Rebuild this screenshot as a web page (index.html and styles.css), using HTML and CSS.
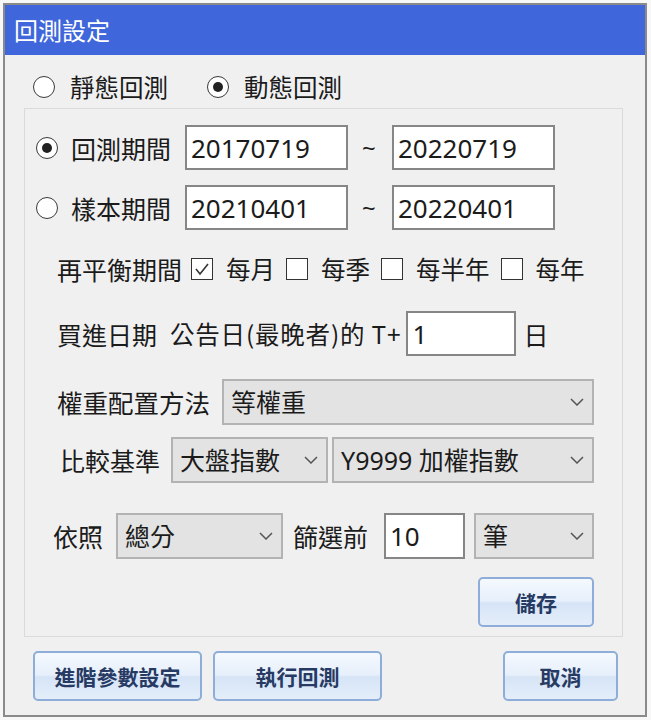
FILE: index.html
```html
<!DOCTYPE html>
<html lang="zh-Hant">
<head>
<meta charset="utf-8">
<title>回測設定</title>
<link rel="stylesheet" href="styles.css">
</head>
<body>
<div class="window">
  <div class="titlebar">回測設定</div>
  <div class="content">
    <div class="mode-row">
      <span class="radio"></span><span class="mode-label">靜態回測</span>
      <span class="radio checked mode-second"></span><span class="mode-label">動態回測</span>
    </div>
    <div class="group">
      <div class="row period-row first">
        <span class="radio checked"></span>
        <span class="label period-label">回測期間</span>
        <div class="textbox date">20170719</div>
        <span class="tilde">~</span>
        <div class="textbox date">20220719</div>
      </div>
      <div class="row period-row second">
        <span class="radio"></span>
        <span class="label period-label">樣本期間</span>
        <div class="textbox date">20210401</div>
        <span class="tilde">~</span>
        <div class="textbox date">20220401</div>
      </div>
      <div class="row check-row">
        <span class="label rebalance-label">再平衡期間</span>
        <span class="checkbox checked"><svg viewBox="0 0 22 22" width="22" height="22"><polyline points="5,11 9,16 17,6" fill="none" stroke="#333" stroke-width="1.6"/></svg></span>
        <span class="check-label">每月</span>
        <span class="checkbox"></span>
        <span class="check-label">每季</span>
        <span class="checkbox"></span>
        <span class="check-label">每半年</span>
        <span class="checkbox"></span>
        <span class="check-label">每年</span>
      </div>
      <div class="row buy-row">
        <span class="label buy-label">買進日期</span>
        <span class="label buy-text">公告日(最晚者)的 T+</span>
        <div class="textbox tplus">1</div>
        <span class="label day-label">日</span>
      </div>
      <div class="row weight-row">
        <span class="label weight-label">權重配置方法</span>
        <div class="select weight-select"><span>等權重</span><svg class="chev" viewBox="0 0 14 8" width="14" height="8"><polyline points="1,1 7,7 13,1" fill="none" stroke="#555" stroke-width="1.5"/></svg></div>
      </div>
      <div class="row compare-row">
        <span class="label compare-label">比較基準</span>
        <div class="select market-select"><span>大盤指數</span><svg class="chev" viewBox="0 0 14 8" width="14" height="8"><polyline points="1,1 7,7 13,1" fill="none" stroke="#555" stroke-width="1.5"/></svg></div>
        <div class="select index-select"><span>Y9999 加權指數</span><svg class="chev" viewBox="0 0 14 8" width="14" height="8"><polyline points="1,1 7,7 13,1" fill="none" stroke="#555" stroke-width="1.5"/></svg></div>
      </div>
      <div class="row filter-row">
        <span class="label by-label">依照</span>
        <div class="select score-select"><span>總分</span><svg class="chev" viewBox="0 0 14 8" width="14" height="8"><polyline points="1,1 7,7 13,1" fill="none" stroke="#555" stroke-width="1.5"/></svg></div>
        <span class="label top-label">篩選前</span>
        <div class="textbox count">10</div>
        <div class="select unit-select"><span>筆</span><svg class="chev" viewBox="0 0 14 8" width="14" height="8"><polyline points="1,1 7,7 13,1" fill="none" stroke="#555" stroke-width="1.5"/></svg></div>
      </div>
      <div class="row save-row">
        <button class="btn save-btn">儲存</button>
      </div>
    </div>
    <div class="bottom-row">
      <button class="btn adv-btn">進階參數設定</button>
      <button class="btn run-btn">執行回測</button>
      <button class="btn cancel-btn">取消</button>
    </div>
  </div>
</div>
</body>
</html>
```

FILE: styles.css
```css
* { box-sizing: border-box; }

html, body {
  margin: 0;
  padding: 0;
  background: #f7f7f7;
}

body {
  font-family: "Noto Sans", "Noto Sans CJK TC", sans-serif;
  color: #1b1b1b;
  padding-top: 3px;
  padding-left: 3px;
}

.window {
  width: 644px;
  height: 714px;
  border: 2px solid #8a8a8a;
  background: #f0f0f0;
  display: flex;
  flex-direction: column;
}

.titlebar {
  height: 50px;
  background: #3f66da;
  color: #ffffff;
  font-family: "Noto Sans CJK TC", sans-serif;
  font-size: 24px;
  line-height: 50px;
  padding-left: 9px;
}

.content {
  padding: 12px 0 0 0;
}

.mode-row {
  height: 40px;
  display: flex;
  align-items: center;
  padding-left: 28px;
}

.mode-label {
  font-family: "Noto Sans CJK TC", sans-serif;
  font-size: 24.5px;
  line-height: 30px;
  margin-left: 15px;
}

.mode-second {
  margin-left: 39px;
}

.radio {
  width: 22px;
  height: 22px;
  border-radius: 50%;
  border: 1.6px solid #3a3a3a;
  background: #ffffff;
  display: inline-flex;
  align-items: center;
  justify-content: center;
  flex: none;
}

.radio.checked::after {
  content: "";
  width: 10px;
  height: 10px;
  border-radius: 50%;
  background: #222;
}

.group {
  margin: 1px 0 0 19px;
  width: 599px;
  border: 1px solid #dadada;
  padding: 16px 0 9px 0;
}

.row {
  display: flex;
  align-items: center;
}

.label {
  font-family: "Noto Sans CJK TC", sans-serif;
  font-size: 25px;
  line-height: 30px;
  white-space: nowrap;
}

.textbox {
  background: #ffffff;
  border: 2px solid #868686;
  font-size: 26px;
  line-height: 30px;
  padding-left: 4px;
  display: flex;
  align-items: center;
  flex: none;
}

.period-row {
  height: 45px;
  padding-left: 11px;
}

.period-row.second {
  margin-top: 15px;
}

.period-label {
  margin-left: 13px;
  width: 100px;
}

.textbox.date {
  margin-left: 14px;
  width: 163px;
  height: 45px;
}

.tilde {
  font-size: 24px;
  margin-left: 14px;
  width: 16px;
}

.check-row {
  margin-top: 20px;
  height: 38px;
  padding-left: 32px;
}

.rebalance-label {
  width: 126px;
}

.checkbox {
  width: 22px;
  height: 22px;
  border: 1.5px solid #333;
  background: #ffffff;
  flex: none;
  margin-left: 8px;
  display: inline-flex;
  align-items: center;
  justify-content: center;
}

.checkbox svg {
  display: block;
  margin: -1.5px;
}

.check-label {
  font-family: "Noto Sans CJK TC", sans-serif;
  font-size: 24.5px;
  line-height: 30px;
  margin-left: 13px;
  margin-right: 3px;
}

.buy-row {
  margin-top: 23px;
  height: 45px;
  padding-left: 32px;
}

.buy-label {
  width: 98px;
}

.buy-text {
  margin-left: 15px;
  font-size: 24.5px;
  letter-spacing: 0.8px;
}

.textbox.tplus {
  margin-left: 5px;
  width: 110px;
  height: 45px;
}

.day-label {
  margin-left: 7px;
}

.select {
  background: #e3e3e3;
  border: 2px solid #b3b3b3;
  height: 46px;
  display: flex;
  align-items: center;
  justify-content: space-between;
  padding: 0 8px 0 7px;
  font-family: "Noto Sans", "Noto Sans CJK TC", sans-serif;
  font-size: 25px;
  line-height: 30px;
  flex: none;
}

.select span {
  white-space: nowrap;
}

.chev {
  display: block;
  flex: none;
}

.weight-row {
  margin-top: 23px;
  height: 46px;
  padding-left: 32px;
}

.weight-label {
  width: 153px;
  font-size: 25.5px;
}

.weight-select {
  margin-left: 12px;
  width: 372px;
}

.compare-row {
  margin-top: 12px;
  height: 46px;
  padding-left: 35px;
}

.compare-label {
  width: 102px;
}

.market-select {
  margin-left: 9px;
  width: 157px;
}

.index-select {
  margin-left: 4px;
  width: 262px;
}

.filter-row {
  margin-top: 30px;
  height: 46px;
  padding-left: 28px;
}

.by-label {
  width: 50px;
}

.score-select {
  margin-left: 13px;
  width: 167px;
}

.top-label {
  margin-left: 10px;
  width: 77px;
}

.textbox.count {
  margin-left: 14px;
  width: 81px;
  height: 46px;
}

.unit-select {
  margin-left: 9px;
  width: 120px;
}

.save-row {
  margin-top: 18px;
  height: 50px;
  justify-content: flex-end;
  padding-right: 28px;
}

.btn {
  height: 50px;
  border: 2px solid #8eadd8;
  border-radius: 5px;
  background: linear-gradient(to bottom, #f5f9fe 0%, #e6effb 48%, #d6e4f6 52%, #e4eefa 100%);
  font-family: "Noto Sans CJK TC", sans-serif;
  font-weight: bold;
  font-size: 21px;
  color: #273a63;
  padding: 0;
  cursor: pointer;
}

.save-btn {
  width: 116px;
}

.bottom-row {
  display: flex;
  margin-top: 14px;
  padding-left: 28px;
}

.adv-btn {
  width: 169px;
}

.run-btn {
  width: 169px;
  margin-left: 11px;
}

.cancel-btn {
  width: 115px;
  margin-left: 121px;
}
```
